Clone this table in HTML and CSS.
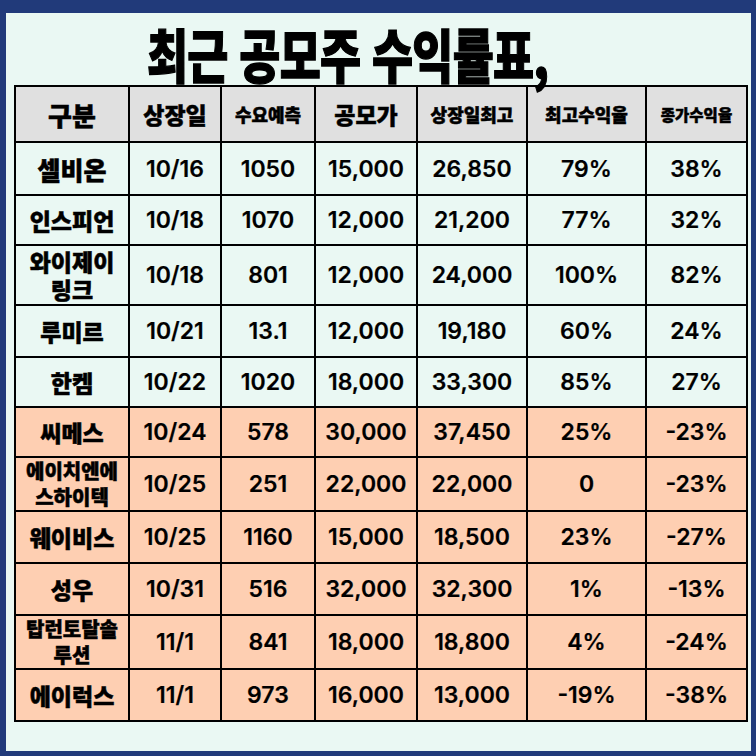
FILE: index.html
```html
<!DOCTYPE html>
<html lang="ko">
<head>
<meta charset="utf-8">
<title>최근 공모주 수익률표</title>
<link rel="stylesheet" href="styles.css">
</head>
<body>
<div class="frame">
  <div class="sheet">
    <h1 class="title"><span class="title-text">최근 공모주 수익률표,</span></h1>
    <div class="table">
      <div class="row head">
        <div class="cell ko hx">구분</div>
        <div class="cell ko hl">상장일</div>
        <div class="cell ko hs">수요예측</div>
        <div class="cell ko hl">공모가</div>
        <div class="cell ko hs">상장일최고</div>
        <div class="cell ko hs">최고수익율</div>
        <div class="cell ko hxs">종가수익율</div>
      </div>
      <div class="row up h51">
        <div class="cell ko name big">셀비온</div>
        <div class="cell num">10/16</div>
        <div class="cell num">1050</div>
        <div class="cell num">15,000</div>
        <div class="cell num">26,850</div>
        <div class="cell num">79%</div>
        <div class="cell num">38%</div>
      </div>
      <div class="row up h48">
        <div class="cell ko name">인스피언</div>
        <div class="cell num">10/18</div>
        <div class="cell num">1070</div>
        <div class="cell num">12,000</div>
        <div class="cell num">21,200</div>
        <div class="cell num">77%</div>
        <div class="cell num">32%</div>
      </div>
      <div class="row up h58">
        <div class="cell ko name two">와이제이<br>링크</div>
        <div class="cell num">10/18</div>
        <div class="cell num">801</div>
        <div class="cell num">12,000</div>
        <div class="cell num">24,000</div>
        <div class="cell num">100%</div>
        <div class="cell num">82%</div>
      </div>
      <div class="row up h50">
        <div class="cell ko name">루미르</div>
        <div class="cell num">10/21</div>
        <div class="cell num">13.1</div>
        <div class="cell num">12,000</div>
        <div class="cell num">19,180</div>
        <div class="cell num">60%</div>
        <div class="cell num">24%</div>
      </div>
      <div class="row up h48">
        <div class="cell ko name">한켐</div>
        <div class="cell num">10/22</div>
        <div class="cell num">1020</div>
        <div class="cell num">18,000</div>
        <div class="cell num">33,300</div>
        <div class="cell num">85%</div>
        <div class="cell num">27%</div>
      </div>
      <div class="row down h48">
        <div class="cell ko name">씨메스</div>
        <div class="cell num">10/24</div>
        <div class="cell num">578</div>
        <div class="cell num">30,000</div>
        <div class="cell num">37,450</div>
        <div class="cell num">25%</div>
        <div class="cell num">-23%</div>
      </div>
      <div class="row down h52">
        <div class="cell ko name small two">에이치엔에<br>스하이텍</div>
        <div class="cell num">10/25</div>
        <div class="cell num">251</div>
        <div class="cell num">22,000</div>
        <div class="cell num">22,000</div>
        <div class="cell num">0</div>
        <div class="cell num">-23%</div>
      </div>
      <div class="row down h50">
        <div class="cell ko name">웨이비스</div>
        <div class="cell num">10/25</div>
        <div class="cell num">1160</div>
        <div class="cell num">15,000</div>
        <div class="cell num">18,500</div>
        <div class="cell num">23%</div>
        <div class="cell num">-27%</div>
      </div>
      <div class="row down h50">
        <div class="cell ko name">성우</div>
        <div class="cell num">10/31</div>
        <div class="cell num">516</div>
        <div class="cell num">32,000</div>
        <div class="cell num">32,300</div>
        <div class="cell num">1%</div>
        <div class="cell num">-13%</div>
      </div>
      <div class="row down h52">
        <div class="cell ko name small two">탑런토탈솔<br>루션</div>
        <div class="cell num">11/1</div>
        <div class="cell num">841</div>
        <div class="cell num">18,000</div>
        <div class="cell num">18,800</div>
        <div class="cell num">4%</div>
        <div class="cell num">-24%</div>
      </div>
      <div class="row down h50">
        <div class="cell ko name">에이럭스</div>
        <div class="cell num">11/1</div>
        <div class="cell num">973</div>
        <div class="cell num">16,000</div>
        <div class="cell num">13,000</div>
        <div class="cell num">-19%</div>
        <div class="cell num">-38%</div>
      </div>
    </div>
  </div>
</div>
</body>
</html>
```

FILE: styles.css
```css
html, body {
  margin: 0;
  padding: 0;
}

body {
  width: 756px;
  height: 756px;
  background: #213a7a;
  font-family: "Noto Sans CJK KR", "Noto Sans", sans-serif;
  color: #000;
}

.frame {
  box-sizing: border-box;
  width: 756px;
  height: 756px;
  padding: 13px 5px 5px 6px;
}

.sheet {
  height: 100%;
  background: #eaf8f3;
  display: flex;
  flex-direction: column;
}

.title {
  margin: 0;
  height: 72px;
  font-family: "Noto Sans CJK KR", sans-serif;
  font-weight: 900;
  font-size: 58px;
  line-height: 72px;
  white-space: nowrap;
  overflow: visible;
}

.title-text {
  display: inline-block;
  margin-left: 141px;
  transform: scaleX(0.77);
  transform-origin: left center;
  letter-spacing: -1px;
  -webkit-text-stroke: 1.3px #000;
  position: relative;
  top: 4px;
}

.table {
  box-sizing: border-box;
  margin-left: 8px;
  width: 734px;
  padding: 2px;
  background: #000;
  display: flex;
  flex-direction: column;
  gap: 2px;
}

.row {
  display: grid;
  grid-template-columns: 112px 90px 92px 100px 108px 117px 99px;
  gap: 2px;
  height: 50px;
}

.row.head { height: 54px; }
.row.h51 { height: 51px; }
.row.h48 { height: 48px; }
.row.h50 { height: 50px; }
.row.h52 { height: 52px; }
.row.h58 { height: 58px; }

.cell {
  display: flex;
  align-items: center;
  justify-content: center;
  text-align: center;
}

.head .cell { background: #e0e0e0; }
.up .cell { background: #eaf8f3; }
.down .cell { background: #fecfb2; }

.ko {
  font-family: "Noto Sans CJK KR", sans-serif;
  font-weight: 900;
  -webkit-text-stroke: 0.5px #000;
}

.hx { font-size: 26px; }
.hl { font-size: 23px; }
.hs { font-size: 18px; }
.hxs { font-size: 15.5px; }

.name {
  font-size: 23px;
  line-height: 28px;
}

.name.big { font-size: 25px; }

.name.small {
  font-size: 20px;
  line-height: 26px;
}

.num {
  font-family: "Inter", "Noto Sans", sans-serif;
  font-weight: 600;
  font-size: 23px;
  -webkit-text-stroke: 0.2px #000;
}
```
